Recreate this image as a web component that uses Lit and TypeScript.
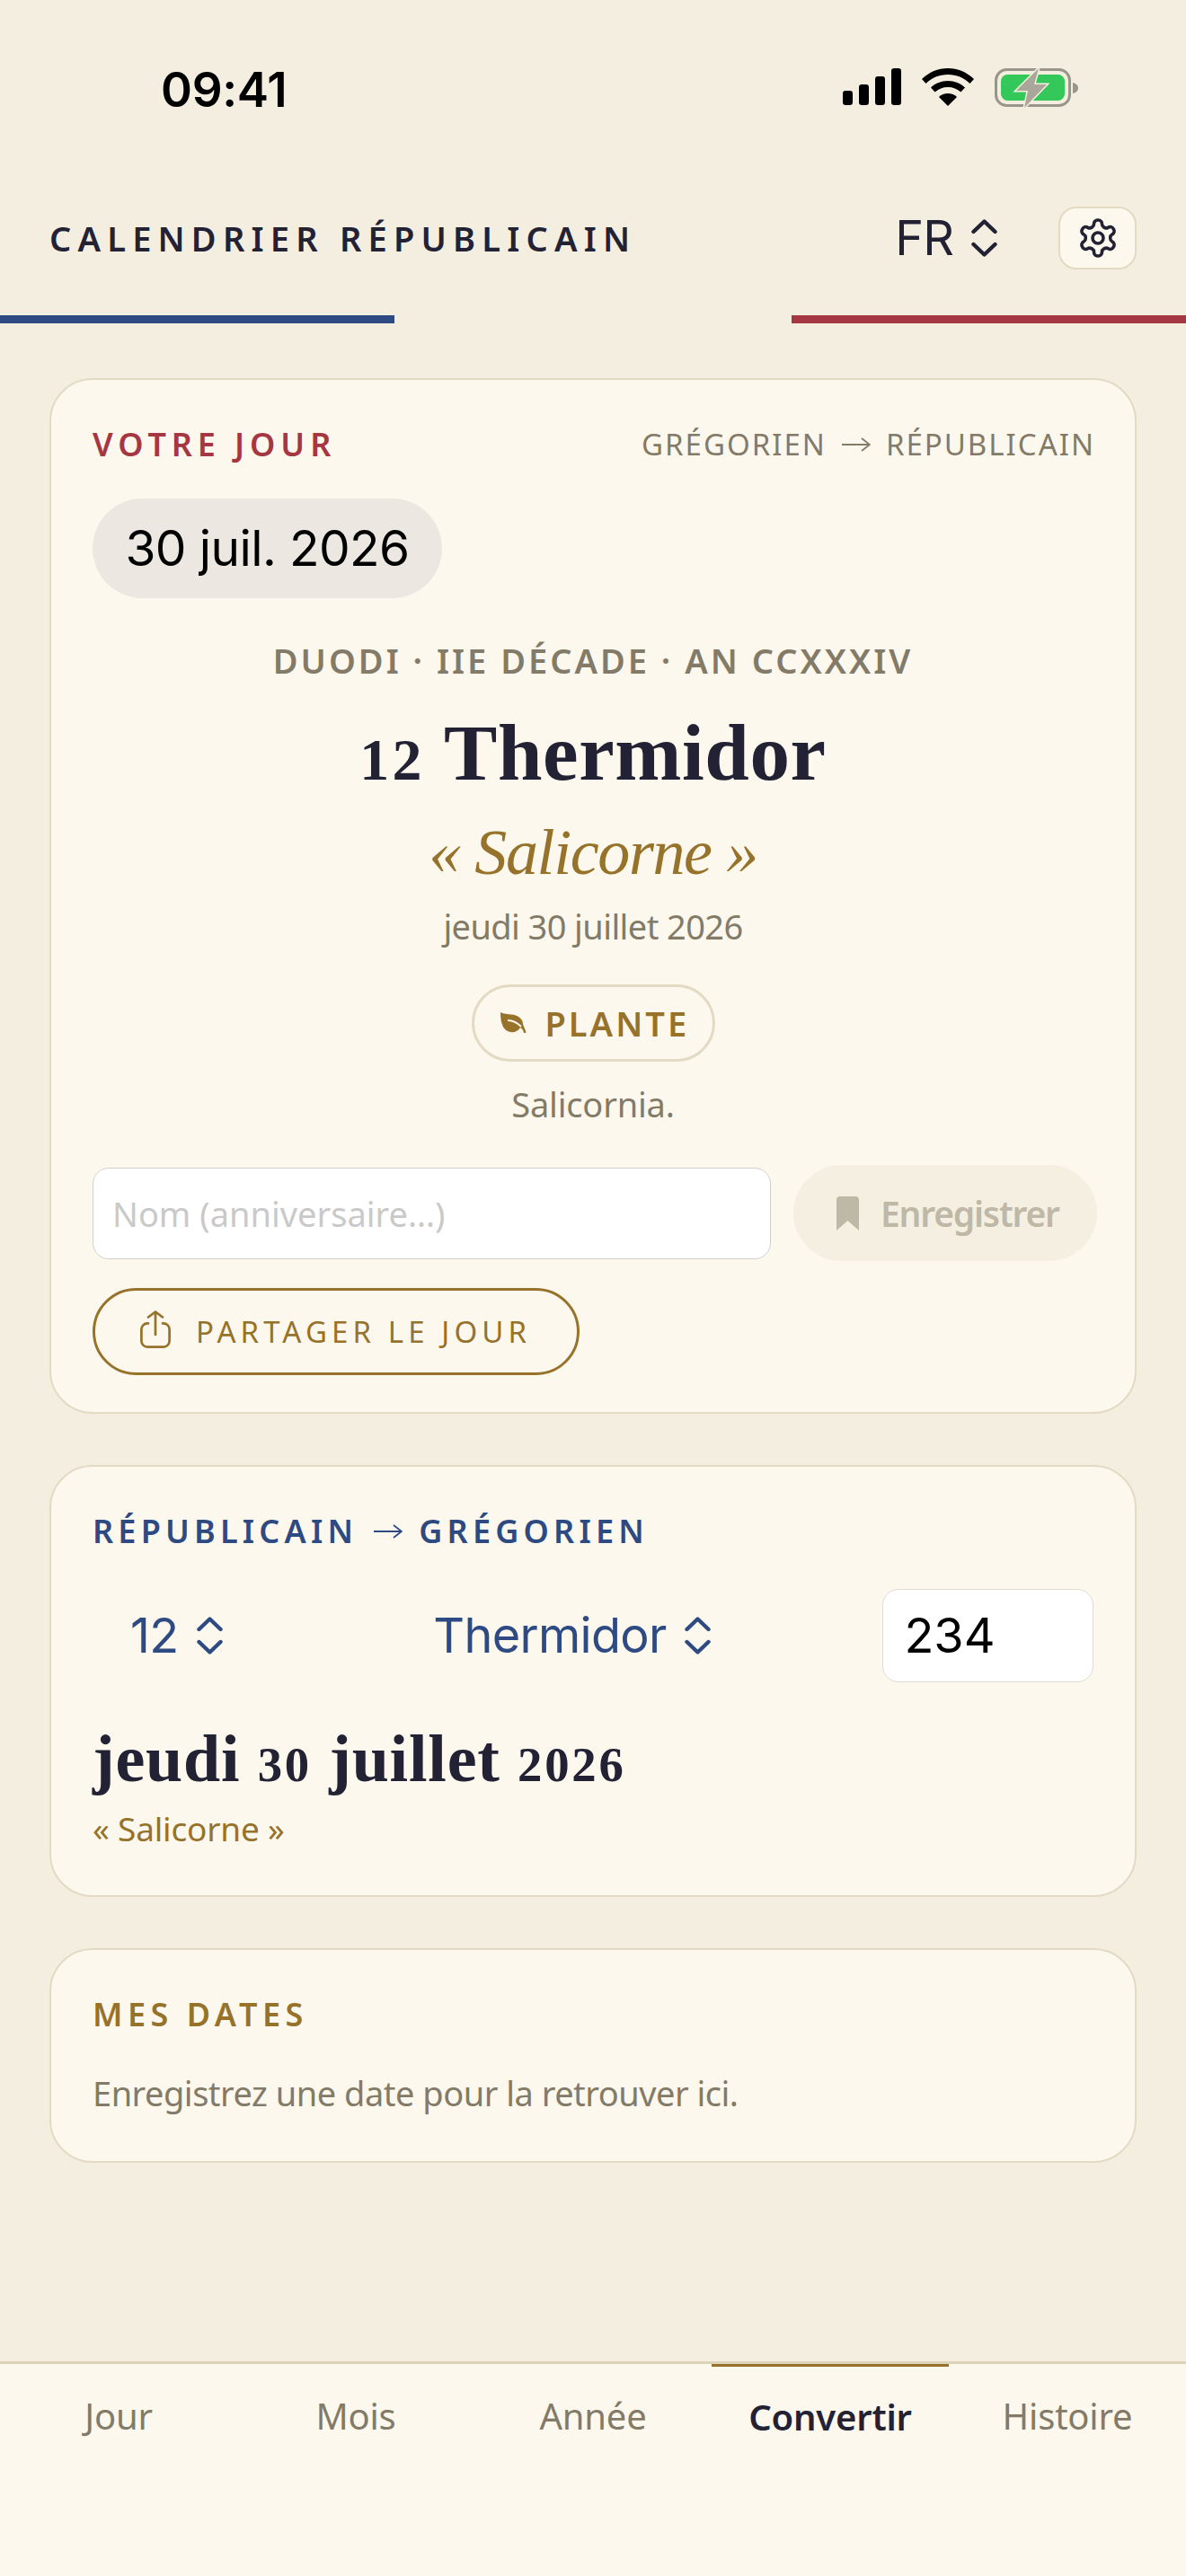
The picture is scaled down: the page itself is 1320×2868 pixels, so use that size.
import { LitElement, html, css } from "lit";
import { customElement } from "lit/decorators.js";

const chev = (stroke: string) => html`<svg class="chev" viewBox="0 0 29 42" fill="none" stroke=${stroke} stroke-width="4.4" stroke-linecap="round" stroke-linejoin="round"><path d="M2.5 14 14.5 2.5 26.5 14"/><path d="M2.5 28 14.5 39.5 26.5 28"/></svg>`;

const arrow = html`<svg class="arrow" viewBox="0 0 32 16" fill="none" stroke="currentColor" stroke-width="1.8"><path d="M0 8h31M22 1l9 7-9 7"/></svg>`;

@customElement("app-root")
export class AppRoot extends LitElement {
  static styles = css`
    :host { display: block; width: 1320px; height: 2868px; background: #f4eee0; color: #232234; font-family: "Noto Sans", "Lato", sans-serif; }
    .page { display: flex; flex-direction: column; height: 2868px; overflow: hidden; }
    .status { height: 180px; display: flex; justify-content: space-between; align-items: flex-start; box-sizing: border-box; padding: 74px 0 0 179px; }
    .time { font: 600 53px/52px "Inter", sans-serif; color: #000; letter-spacing: -0.3px; }
    .status-icons { display: flex; gap: 23px; align-items: flex-start; padding: 2px 120px 0 0; }
    .status-icons svg { display: block; }
    .head { height: 171px; box-sizing: border-box; padding: 50px 55px 0; display: flex; align-items: flex-start; }
    .brand { flex: 1; font-weight: 600; font-size: 38px; line-height: 70px; letter-spacing: 7.2px; color: #232234; }
    .lang { display: flex; align-items: center; gap: 20px; margin-right: 68px; height: 70px; font: 400 54px/70px "Inter", sans-serif; letter-spacing: -1px; }
    .chev { width: 29px; height: 42px; display: block; }
    .gear { width: 87px; height: 70px; box-sizing: border-box; border: 2px solid #e3dac4; border-radius: 20px; background: #fcf8ee; display: flex; align-items: center; justify-content: center; }
    .gear svg { width: 48px; height: 48px; }
    .tricolor { display: grid; grid-template-columns: 439px 442px 439px; height: 9px; }
    .blue { background: #2e4a82; } .red { background: #a53743; }
    main { flex: 1; padding: 61px 55px 0; display: flex; flex-direction: column; gap: 57px; }
    .card { background: #fcf8ee; border: 2px solid #e3dac4; border-radius: 48px; box-sizing: border-box; padding: 0 46px; }
    .c1 { height: 1153px; padding-top: 52px; }
    .c2 { height: 481px; padding-top: 52px; }
    .c3 { height: 239px; padding-top: 52px; }
    .label { font-weight: 600; font-size: 36px; line-height: 40px; letter-spacing: 5.2px; display: flex; align-items: center; gap: 18px; }
    .row { display: flex; justify-content: space-between; align-items: center; }
    .red-t { color: #a53743; letter-spacing: 5.9px; } .blue-t { color: #2e4a82; } .gold-t { color: #96722a; letter-spacing: 5.5px; }
    .dir { font-size: 33px; line-height: 40px; letter-spacing: 2px; color: #837b67; display: flex; align-items: center; gap: 17px; margin-right: -2px; }
    .arrow { width: 32px; height: 16px; display: block; flex: none; }
    .pill { margin-top: 40px; width: 389px; height: 111px; border-radius: 56px; background: #ece8e1; display: flex; align-items: center; justify-content: center; font: 400 55px/1 "Inter", sans-serif; letter-spacing: -0.6px; color: #000; }
    .center { display: flex; flex-direction: column; align-items: center; text-align: center; }
    .cal { margin-top: 49px; font-weight: 600; font-size: 38px; line-height: 40px; letter-spacing: 3px; color: #837b67; }
    h1 { margin: 33px 0 0; font: 700 89px/100px "Liberation Serif", serif; letter-spacing: .6px; color: #232234; }
    .os { font-size: .74em; letter-spacing: .05em; }
    .saint { margin-top: 11px; font: italic 400 72px/84px "Liberation Serif", serif; letter-spacing: -1.4px; color: #96722a; }
    .greg { margin-top: 14px; font-size: 38px; line-height: 52px; letter-spacing: -.6px; color: #837b67; }
    .tag { margin-top: 39px; box-sizing: border-box; height: 86px; width: 271px; border: 3px solid #e3dac4; border-radius: 43px; display: flex; align-items: center; gap: 21px; padding-left: 29px; color: #96722a; font-weight: 600; font-size: 38px; letter-spacing: 3px; }
    .tag svg { width: 29px; height: 24px; display: block; flex: none; }
    .latin { margin-top: 22px; font-size: 38px; line-height: 50px; letter-spacing: -.2px; color: #837b67; }
    .save { margin-top: 43px; display: flex; justify-content: space-between; align-items: center; margin-right: -4px; }
    .field { box-sizing: border-box; width: 755px; height: 102px; background: #fff; border: 1px solid #d2d0cb; border-radius: 18px; padding-left: 21px; display: flex; align-items: center; font-size: 38px; letter-spacing: 0; color: #c9c9c9; }
    .btn { box-sizing: border-box; width: 338px; height: 107px; border-radius: 54px; background: #f5efe2; display: flex; align-items: center; gap: 24px; padding-left: 48px; color: #bfb8a6; font-weight: 600; font-size: 39px; letter-spacing: -1.2px; }
    .btn svg { width: 25px; height: 38px; display: block; }
    .share { margin-top: 30px; box-sizing: border-box; width: 542px; height: 97px; border: 3px solid #96722a; border-radius: 49px; display: flex; align-items: center; gap: 28px; padding-left: 50px; color: #96722a; font-size: 33px; letter-spacing: 5.1px; }
    .share svg { width: 34px; height: 42px; display: block; flex: none; margin-top: -5px; }
    .conv { margin-top: 44px; display: flex; align-items: center; height: 104px; color: #2e4a82; font: 400 54px/1 "Inter", sans-serif; letter-spacing: -.7px; }
    .sel { display: flex; align-items: center; gap: 20px; }
    .num { margin-left: 42px; width: 338px; }
    .month { width: 501px; }
    .year { box-sizing: border-box; width: 235px; height: 104px; background: #fff; border: 1px solid #dedbd3; border-radius: 18px; padding-left: 23px; display: flex; align-items: center; color: #000; font-size: 54px; letter-spacing: 0; }
    h2 { margin: 43px 0 0; font: 700 74px/84px "Liberation Serif", serif; letter-spacing: .8px; color: #232234; }
    .sub { margin-top: 4px; font-size: 37px; line-height: 50px; letter-spacing: -.2px; color: #96722a; }
    .empty { margin-top: 42px; font-size: 38px; line-height: 50px; letter-spacing: -.5px; color: #837b67; }
    nav { height: 239px; box-sizing: border-box; border-top: 3px solid #ddd3bb; background: #fcf8ee; display: grid; grid-template-columns: repeat(5, 1fr); }
    nav a { height: 108px; display: flex; align-items: center; justify-content: center; padding-top: 6px; box-sizing: border-box; font-size: 40px; letter-spacing: -.2px; color: #837b67; }
    nav a.on { color: #232234; font-weight: 600; border-top: 3px solid #96722a; }
  `;

  render() {
    return html`<div class="page">
      <div class="status">
        <div class="time">09:41</div>
        <div class="status-icons">
          <svg width="65" height="41" viewBox="0 0 65 41" fill="#000"><rect x="0" y="25" width="11" height="16" rx="3.2"/><rect x="18" y="18" width="11" height="23" rx="3.2"/><rect x="36" y="9" width="11" height="32" rx="3.2"/><rect x="54" y="0" width="11" height="41" rx="3.2"/></svg>
          <svg width="58" height="42" viewBox="0 0 58 42" fill="#000"><path d="M29 0C18 0 8 4.300 0 12l4.500 5C11 10.500 19.500 7 29 7s18 3.500 24.500 10l4.500-5C50 4.300 40 0 29 0Z"/><path d="M29 14c-7.500 0-14 2.800-19 7.500l4.600 5C18.500 23 23.500 21 29 21s10.500 2 14.400 5.500l4.600-5C43 16.800 36.500 14 29 14Z"/><path d="M29 28c-4 0-7.500 1.500-10 4L29 42l10-10c-2.500-2.500-6-4-10-4Z"/></svg>
          <svg width="93" height="44" viewBox="0 0 93 44" fill="none"><rect x="1.500" y="1.500" width="82" height="40" rx="12" stroke="#98958a" stroke-width="3"/><rect x="7" y="7" width="71" height="29" rx="7.500" fill="#34c759"/><path d="M87 16c3 .6 6 2.600 6 6s-3 5.400-6 6Z" fill="#98958a"/><path d="M49 0 24 25h13l-4 19 25-26H44Z" fill="#aaa69a" stroke="#f4eee0" stroke-width="3" paint-order="stroke"/></svg>
        </div>
      </div>
      <header class="head">
        <div class="brand">CALENDRIER RÉPUBLICAIN</div>
        <div class="lang">FR ${chev("#232234")}</div>
        <div class="gear"><svg viewBox="0 0 24 24" fill="none" stroke="#232234" stroke-width="1.8" stroke-linecap="round" stroke-linejoin="round"><path d="M12.220 2h-.44a2 2 0 0 0-2 2v.18a2 2 0 0 1-1 1.730l-.43.25a2 2 0 0 1-2 0l-.15-.08a2 2 0 0 0-2.730.73l-.22.38a2 2 0 0 0 .73 2.730l.15.1a2 2 0 0 1 1 1.720v.51a2 2 0 0 1-1 1.740l-.15.09a2 2 0 0 0-.73 2.730l.22.38a2 2 0 0 0 2.730.73l.15-.08a2 2 0 0 1 2 0l.43.25a2 2 0 0 1 1 1.730V20a2 2 0 0 0 2 2h.44a2 2 0 0 0 2-2v-.18a2 2 0 0 1 1-1.730l.43-.25a2 2 0 0 1 2 0l.15.08a2 2 0 0 0 2.730-.73l.22-.39a2 2 0 0 0-.73-2.730l-.15-.08a2 2 0 0 1-1-1.740v-.5a2 2 0 0 1 1-1.740l.15-.09a2 2 0 0 0 .73-2.730l-.22-.38a2 2 0 0 0-2.730-.73l-.15.08a2 2 0 0 1-2 0l-.43-.25a2 2 0 0 1-1-1.730V4a2 2 0 0 0-2-2z"/><circle cx="12" cy="12" r="3"/></svg></div>
      </header>
      <div class="tricolor"><div class="blue"></div><div></div><div class="red"></div></div>
      <main>
        <section class="card c1">
          <div class="row">
            <div class="label red-t">VOTRE JOUR</div>
            <div class="dir">GRÉGORIEN ${arrow} RÉPUBLICAIN</div>
          </div>
          <div class="pill">30 juil. 2026</div>
          <div class="center">
            <div class="cal">DUODI · IIE DÉCADE · AN CCXXXIV</div>
            <h1><span class="os">12</span> Thermidor</h1>
            <div class="saint">« Salicorne »</div>
            <div class="greg">jeudi 30 juillet 2026</div>
            <div class="tag"><svg viewBox="0 0 29 24"><path fill="#96722a" d="M0 0C4 2 8 2 12 2.500 19 3 25 7 25 13L26 16C27 18 28 20 28.500 23L26 23C25.500 20 24 18 22 17 20 21 15 23 11 22 4 21 0 14 0 0Z"/><path fill="none" stroke="#fcf8ee" stroke-width="2" d="M8 9C12 9 18 11 23 16"/></svg>PLANTE</div>
            <div class="latin">Salicornia.</div>
          </div>
          <div class="save">
            <div class="field">Nom (anniversaire…)</div>
            <div class="btn"><svg viewBox="0 0 25 38" fill="#bfb8a6"><path d="M0 4a4 4 0 0 1 4-4h17a4 4 0 0 1 4 4v34L12.500 27 0 38Z"/></svg>Enregistrer</div>
          </div>
          <div class="share"><svg viewBox="0 0 34 42" fill="none" stroke="#96722a" stroke-width="2.700" stroke-linecap="round" stroke-linejoin="round"><path d="M9 14.400H8A6.600 6.600 0 0 0 1.400 21v13A6.600 6.600 0 0 0 8 40.600h18a6.600 6.600 0 0 0 6.600-6.600V21A6.600 6.600 0 0 0 26 14.400h-1"/><path d="M17 27V1.500M9 7.500l8-6 8 6"/></svg>PARTAGER LE JOUR</div>
        </section>
        <section class="card c2">
          <div class="label blue-t">RÉPUBLICAIN ${arrow} GRÉGORIEN</div>
          <div class="conv">
            <div class="sel num">12 ${chev("#2e4a82")}</div>
            <div class="sel month">Thermidor ${chev("#2e4a82")}</div>
            <div class="year">234</div>
          </div>
          <h2>jeudi <span class="os">30</span> juillet <span class="os">2026</span></h2>
          <div class="sub">« Salicorne »</div>
        </section>
        <section class="card c3">
          <div class="label gold-t">MES DATES</div>
          <div class="empty">Enregistrez une date pour la retrouver ici.</div>
        </section>
      </main>
      <nav>
        <a>Jour</a><a>Mois</a><a>Année</a><a class="on">Convertir</a><a>Histoire</a>
      </nav>
    </div>`;
  }
}
